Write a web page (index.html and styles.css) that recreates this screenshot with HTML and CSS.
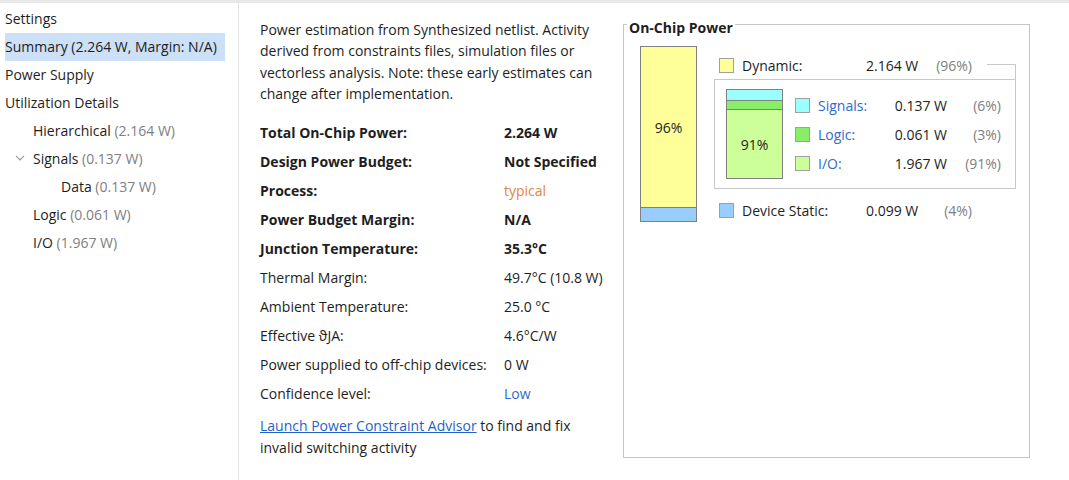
FILE: index.html
```html
<!DOCTYPE html>
<html lang="en">
<head>
<meta charset="utf-8">
<title>Power Summary</title>
<link rel="stylesheet" href="styles.css">
</head>
<body>
<div class="app">
  <nav class="sidebar">
    <div class="tree-item"><span class="label">Settings</span></div>
    <div class="tree-item selected"><span class="label">Summary (2.264 W, Margin: N/A)</span></div>
    <div class="tree-item"><span class="label">Power Supply</span></div>
    <div class="tree-item"><span class="label">Utilization Details</span></div>
    <div class="tree-item lvl1"><span class="label">Hierarchical <span class="dim">(2.164 W)</span></span></div>
    <div class="tree-item lvl1 has-toggle">
      <svg class="chev" width="10" height="6" viewBox="0 0 10 6"><polyline points="1,0.8 5,4.8 9,0.8" fill="none" stroke="#9a9a9a" stroke-width="1.2"/></svg>
      <span class="label">Signals <span class="dim">(0.137 W)</span></span>
    </div>
    <div class="tree-item lvl2"><span class="label">Data <span class="dim">(0.137 W)</span></span></div>
    <div class="tree-item lvl1"><span class="label">Logic <span class="dim">(0.061 W)</span></span></div>
    <div class="tree-item lvl1"><span class="label">I/O <span class="dim">(1.967 W)</span></span></div>
  </nav>
  <main class="content">
    <section class="details">
      <p class="intro">Power estimation from Synthesized netlist. Activity derived from constraints files, simulation files or vectorless analysis. Note: these early estimates can change after implementation.</p>
      <dl class="facts">
        <dt class="strong">Total On-Chip Power:</dt><dd class="strong">2.264 W</dd>
        <dt class="strong">Design Power Budget:</dt><dd class="strong">Not Specified</dd>
        <dt class="strong">Process:</dt><dd class="orange">typical</dd>
        <dt class="strong">Power Budget Margin:</dt><dd class="strong">N/A</dd>
        <dt class="strong">Junction Temperature:</dt><dd class="strong">35.3°C</dd>
        <dt>Thermal Margin:</dt><dd>49.7°C (10.8 W)</dd>
        <dt>Ambient Temperature:</dt><dd>25.0 °C</dd>
        <dt>Effective ϑJA:</dt><dd>4.6°C/W</dd>
        <dt>Power supplied to off-chip devices:</dt><dd>0 W</dd>
        <dt>Confidence level:</dt><dd class="blue">Low</dd>
      </dl>
      <p class="advisor"><a href="#" class="link">Launch Power Constraint Advisor</a> to find and fix invalid switching activity</p>
    </section>
    <section class="chip-box">
      <div class="chip-title">On-Chip Power</div>
      <div class="chip-body">
        <div class="bar main-bar">
          <div class="seg seg-dynamic">96%</div>
          <div class="seg seg-static"></div>
        </div>
        <div class="legend">
          <div class="lrow top-row">
            <span class="sw sw-yellow"></span><span class="lname">Dynamic:</span><span class="lval">2.164 W</span><span class="lpct">(96%)</span>
          </div>
          <div class="subbox">
            <div class="bar sub-bar">
              <div class="seg seg-signals"></div>
              <div class="seg seg-logic"></div>
              <div class="seg seg-io">91%</div>
            </div>
            <div class="sublegend">
              <div class="srow"><span class="sw sw-cyan"></span><span class="sname">Signals:</span><span class="sval">0.137 W</span><span class="spct">(6%)</span></div>
              <div class="srow"><span class="sw sw-green"></span><span class="sname">Logic:</span><span class="sval">0.061 W</span><span class="spct">(3%)</span></div>
              <div class="srow"><span class="sw sw-lgreen"></span><span class="sname">I/O:</span><span class="sval">1.967 W</span><span class="spct">(91%)</span></div>
            </div>
          </div>
          <div class="lrow static-row">
            <span class="sw sw-blue"></span><span class="lname">Device Static:</span><span class="lval">0.099 W</span><span class="lpct">(4%)</span>
          </div>
        </div>
      </div>
    </section>
  </main>
</div>
</body>
</html>
```
FILE: styles.css
```css
html, body {
  margin: 0;
  padding: 0;
  background: #ffffff;
}
body {
  font-family: "Open Sans", "Noto Sans", sans-serif;
  font-size: 14px;
  color: #1e1e1e;
}
.app {
  display: flex;
  height: 480px;
}
.sidebar {
  width: 239px;
  box-sizing: border-box;
  border-top: 3px solid #e8e8e8;
  border-right: 1px solid #e4e4e4;
  padding-top: 2px;
}
.tree-item {
  display: flex;
  align-items: center;
  height: 28px;
  padding-left: 5px;
  white-space: nowrap;
}
.tree-item .label {
  display: inline-block;
  line-height: 28px;
  padding-right: 4px;
}
.tree-item.selected .label {
  background: #cce0f7;
  padding-right: 8px;
}
.tree-item.lvl1 { padding-left: 33px; }
.tree-item.lvl1.has-toggle { padding-left: 15px; }
.tree-item.lvl2 { padding-left: 61px; }
.chev {
  margin-right: 8px;
  margin-top: -2px;
}
.dim { color: #808080; }

.content {
  flex: 1;
  display: flex;
  align-items: flex-start;
  border-top: 3px solid #e8e8e8;
}
.details {
  width: 384px;
  box-sizing: border-box;
  padding-left: 21px;
}
.intro {
  margin: 16px 0 0;
  width: 345px;
  line-height: 21.3px;
}
.facts {
  margin: 14px 0 0;
  display: grid;
  grid-template-columns: 244px auto;
  line-height: 29px;
}
.facts dt, .facts dd {
  margin: 0;
  white-space: nowrap;
}
.strong { font-weight: bold; }
.orange { color: #e5843c; }
.blue { color: #2f6bcc; }
.advisor {
  margin: 7px 0 0;
  width: 345px;
  line-height: 22px;
}
.link {
  color: #1f62c8;
  text-decoration: underline;
}

.chip-box {
  margin-top: 21px;
  width: 407px;
  height: 434px;
  box-sizing: border-box;
  border: 1px solid #c6c6c6;
}
.chip-title {
  display: table;
  margin: -6px 0 0 3px;
  padding: 0 2px;
  background: #ffffff;
  font-weight: bold;
  line-height: 18px;
}
.chip-body {
  display: flex;
  align-items: flex-start;
  padding-left: 16px;
  margin-top: 9px;
}
.bar {
  box-sizing: border-box;
  border: 1px solid #808080;
  display: flex;
  flex-direction: column;
}
.seg {
  display: flex;
  align-items: center;
  justify-content: center;
  box-sizing: border-box;
}
.main-bar {
  width: 57px;
  height: 176px;
}
.seg-dynamic {
  flex: 1;
  background: #ffff99;
}
.seg-static {
  height: 14px;
  border-top: 1px solid #808080;
  background: #99ccff;
}
.legend {
  margin-left: 17px;
  width: 302px;
}
.lrow {
  display: grid;
  grid-template-columns: 15px 132px 64px 42px;
  align-items: center;
  height: 20px;
  padding-left: 5px;
}
.top-row { margin-top: 9px; }
.static-row { margin-top: 11px; }
.sw {
  width: 15px;
  height: 15px;
  box-sizing: border-box;
  border: 1px solid #a0a0a0;
}
.sw-yellow { background: #ffff99; }
.sw-blue { background: #99ccff; }
.sw-cyan { background: #99ffff; }
.sw-green { background: #88ee66; }
.sw-lgreen { background: #ccff99; }
.lname { padding-left: 8px; }
.lpct, .spct {
  text-align: right;
  color: #808080;
}
.subbox {
  position: relative;
  margin-top: 4px;
  box-sizing: border-box;
  width: 302px;
  border: 1px solid #c8c8c8;
  padding: 9px 0 9px 11px;
  display: flex;
  align-items: flex-start;
}
.subbox::before {
  content: "";
  position: absolute;
  top: -16px;
  right: -1px;
  width: 28px;
  height: 16px;
  border-top: 1px solid #c8c8c8;
  border-right: 1px solid #c8c8c8;
}
.sub-bar {
  width: 57px;
  height: 90px;
}
.seg-signals {
  height: 10px;
  background: #99ffff;
}
.seg-logic {
  height: 9px;
  border-top: 1px solid #808080;
  background: #88ee66;
}
.seg-io {
  flex: 1;
  border-top: 1px solid #808080;
  background: #ccff99;
}
.sublegend {
  margin-left: 12px;
  margin-top: 2px;
}
.srow {
  display: grid;
  grid-template-columns: 15px 70px 67px 54px;
  align-items: center;
  height: 29px;
}
.sname {
  padding-left: 8px;
  color: #2f6bcc;
}
.sval { text-align: right; }
```
